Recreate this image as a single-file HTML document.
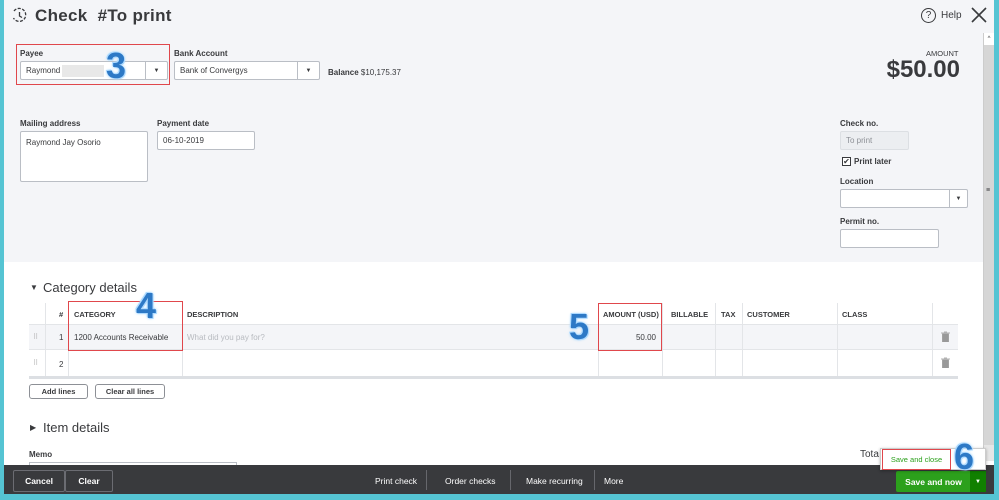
<!DOCTYPE html><html><head><style>
*{margin:0;padding:0;box-sizing:border-box}
body{width:999px;height:500px;overflow:hidden;background:#55c4d3;font-family:"Liberation Sans",sans-serif;color:#393a3d;position:relative}
.a{position:absolute}
#main{left:4px;top:0;width:990px;height:494px;background:#fff;overflow:hidden}
.top{left:0;top:0;width:990px;height:262px;background:#f4f5f8}
.lbl{font-size:8px;font-weight:bold;color:#393a3d}
.in{background:#fff;border:1px solid #babec5;border-radius:2px;font-size:8px;padding:0 5px;display:flex;align-items:center}
.dd{position:absolute;right:0;top:0;bottom:0;width:22px;border-left:1px solid #babec5;font-size:6px;display:flex;align-items:center;justify-content:center}
.num{font-weight:bold;font-size:36px;color:#2d79c6;text-shadow:0 0 2px #bfe3ff,0 0 3px #9fd3ff,1px 1px 0 #a9d8ff,-1px -1px 0 #a9d8ff}
.th{font-size:7.5px;font-weight:bold;top:310px}
.vl{width:1px;background:#e3e5e8}
.btn{border:1px solid #8d9096;border-radius:3px;font-size:7.5px;font-weight:bold;display:flex;align-items:center;justify-content:center;background:#fff}
.ft{font-size:8.5px;color:#fff;top:476px}
</style></head><body>
<div id="main" class="a">
<div class="a top"></div>
</div>
<svg class="a" style="left:11px;top:7px" width="17" height="17" viewBox="0 0 17 17"><path d="M3 4 A6.5 6.5 0 1 1 2.5 11" fill="none" stroke="#393a3d" stroke-width="1.3" stroke-dasharray="3 1.5"/><path d="M8.5 5v4l2.5 1.5" fill="none" stroke="#393a3d" stroke-width="1.3"/></svg>
<div class="a" style="left:35px;top:6px;font-size:17px;font-weight:bold;letter-spacing:0.3px">Check&nbsp; #To print</div>
<div class="a" style="left:921px;top:8px;width:15px;height:15px;border:1.3px solid #393a3d;border-radius:50%;font-size:10px;text-align:center;line-height:13px">?</div>
<div class="a" style="left:941px;top:10px;font-size:10px">Help</div>
<svg class="a" style="left:971px;top:7px" width="16" height="16"><path d="M1 1L15 15M15 1L1 15" stroke="#393a3d" stroke-width="1.6"/></svg>
<div class="a" style="left:983px;top:33px;width:11px;height:428px;background:#e6e6e6;border-left:1px solid #ccc"></div>
<div class="a" style="left:984px;top:33px;width:10px;height:12px;background:#fff;font-size:6px;text-align:center;line-height:12px">^</div>
<div class="a" style="left:984px;top:45px;width:10px;height:400px;background:#d6d6d6"></div>
<div class="a" style="left:986px;top:187px;font-size:7px">≡</div>
<div class="a" style="left:16px;top:44px;width:154px;height:41px;border:1px solid #e0474c"></div>
<div class="a lbl" style="left:20px;top:49px">Payee</div>
<div class="a in" style="left:20px;top:61px;width:148px;height:19px">Raymond<span style="display:inline-block;width:42px;height:12px;background:#e8e8e8;margin-left:2px"></span><div class="dd">▼</div></div>
<div class="a num" style="left:106px;top:45px">3</div>
<div class="a lbl" style="left:174px;top:49px">Bank Account</div>
<div class="a in" style="left:174px;top:61px;width:146px;height:19px">Bank of Convergys<div class="dd">▼</div></div>
<div class="a" style="left:328px;top:68px;font-size:8px"><b>Balance</b> $10,175.37</div>
<div class="a" style="left:926px;top:49px;font-size:7.5px">AMOUNT</div>
<div class="a" style="left:840px;top:56px;width:120px;text-align:right;font-size:24px;font-weight:bold">$50.00</div>
<div class="a lbl" style="left:20px;top:119px">Mailing address</div>
<div class="a in" style="left:20px;top:131px;width:128px;height:51px;align-items:flex-start;padding-top:6px">Raymond Jay Osorio</div>
<div class="a lbl" style="left:157px;top:119px">Payment date</div>
<div class="a in" style="left:157px;top:131px;width:98px;height:19px">06-10-2019</div>
<div class="a lbl" style="left:840px;top:119px">Check no.</div>
<div class="a in" style="left:840px;top:131px;width:69px;height:19px;background:#eceef1;border-color:#dcdfe3;color:#8d9096">To print</div>
<div class="a" style="left:842px;top:157px;width:9px;height:9px;border:1px solid #393a3d;background:#fff;font-size:8px;line-height:7px;text-align:center">✔</div>
<div class="a" style="left:854px;top:157px;font-size:8px;font-weight:bold">Print later</div>
<div class="a lbl" style="left:840px;top:177px">Location</div>
<div class="a in" style="left:840px;top:189px;width:128px;height:19px"><div class="dd" style="width:18px">▼</div></div>
<div class="a lbl" style="left:840px;top:217px">Permit no.</div>
<div class="a in" style="left:840px;top:229px;width:99px;height:19px"></div>
<div class="a" style="left:30px;top:283px;font-size:8px">▼</div>
<div class="a" style="left:43px;top:280px;font-size:13px">Category details</div>
<div class="a" style="left:29px;top:324px;width:929px;height:26px;background:#f4f5f8;border-top:1px solid #e3e5e8;border-bottom:1px solid #e3e5e8"></div>
<div class="a" style="left:29px;top:376px;width:929px;height:3px;background:#dcdfe3"></div>
<div class="a vl" style="left:45px;top:303px;height:73px"></div>
<div class="a vl" style="left:68px;top:303px;height:73px"></div>
<div class="a vl" style="left:182px;top:303px;height:73px"></div>
<div class="a vl" style="left:598px;top:303px;height:73px"></div>
<div class="a vl" style="left:662px;top:303px;height:73px"></div>
<div class="a vl" style="left:715px;top:303px;height:73px"></div>
<div class="a vl" style="left:742px;top:303px;height:73px"></div>
<div class="a vl" style="left:837px;top:303px;height:73px"></div>
<div class="a vl" style="left:932px;top:303px;height:73px"></div>
<div class="a th" style="left:59px">#</div>
<div class="a th" style="left:74px">CATEGORY</div>
<div class="a th" style="left:187px">DESCRIPTION</div>
<div class="a th" style="left:603px">AMOUNT (USD)</div>
<div class="a th" style="left:671px">BILLABLE</div>
<div class="a th" style="left:721px">TAX</div>
<div class="a th" style="left:747px">CUSTOMER</div>
<div class="a th" style="left:842px">CLASS</div>
<div class="a" style="left:33px;top:333px;font-size:7px;color:#aaa">⠿</div>
<div class="a" style="left:33px;top:359px;font-size:7px;color:#aaa">⠿</div>
<div class="a" style="left:59px;top:333px;font-size:8px">1</div>
<div class="a" style="left:59px;top:360px;font-size:8px">2</div>
<div class="a" style="left:74px;top:333px;font-size:8px">1200 Accounts Receivable</div>
<div class="a" style="left:187px;top:333px;font-size:8px;color:#b8bbc0">What did you pay for?</div>
<div class="a" style="left:600px;top:333px;width:56px;text-align:right;font-size:8px">50.00</div>
<svg class="a" style="left:941px;top:331px" width="9" height="11"><path d="M0 2h9M3 1h3M1.5 3h6v8h-6z" fill="#999" stroke="#999" stroke-width=".8"/></svg>
<svg class="a" style="left:941px;top:357px" width="9" height="11"><path d="M0 2h9M3 1h3M1.5 3h6v8h-6z" fill="#999" stroke="#999" stroke-width=".8"/></svg>
<div class="a" style="left:68px;top:301px;width:115px;height:50px;border:1px solid #e0474c"></div>
<div class="a" style="left:598px;top:303px;width:64px;height:48px;border:1px solid #e0474c"></div>
<div class="a num" style="left:136px;top:285px">4</div>
<div class="a num" style="left:569px;top:306px">5</div>
<div class="a btn" style="left:29px;top:384px;width:59px;height:15px">Add lines</div>
<div class="a btn" style="left:95px;top:384px;width:70px;height:15px">Clear all lines</div>
<div class="a" style="left:30px;top:423px;font-size:8px">▶</div>
<div class="a" style="left:43px;top:420px;font-size:13px">Item details</div>
<div class="a lbl" style="left:29px;top:450px">Memo</div>
<div class="a" style="left:29px;top:462px;width:208px;height:6px;border:1px solid #babec5;border-bottom:none;background:#fff"></div>
<div class="a" style="left:860px;top:449px;font-size:10px">Tota</div>
<div class="a" style="left:4px;top:465px;width:990px;height:29px;background:#393a3d"></div>
<div class="a" style="left:13px;top:470px;width:52px;height:22px;border:1px solid #6b6c72;border-radius:2px;color:#fff;font-size:8.5px;font-weight:bold;display:flex;align-items:center;justify-content:center">Cancel</div>
<div class="a" style="left:65px;top:470px;width:48px;height:22px;border:1px solid #6b6c72;border-radius:2px;color:#fff;font-size:8.5px;font-weight:bold;display:flex;align-items:center;justify-content:center">Clear</div>
<div class="a ft" style="left:375px">Print check</div>
<div class="a" style="left:426px;top:470px;width:1px;height:20px;background:#66676c"></div>
<div class="a ft" style="left:445px">Order checks</div>
<div class="a" style="left:510px;top:470px;width:1px;height:20px;background:#66676c"></div>
<div class="a ft" style="left:526px">Make recurring</div>
<div class="a" style="left:594px;top:470px;width:1px;height:20px;background:#66676c"></div>
<div class="a ft" style="left:604px">More</div>
<div class="a" style="left:896px;top:471px;width:75px;height:21px;background:#2ca01c;border-radius:2px 0 0 2px;color:#fff;font-size:8.5px;font-weight:bold;display:flex;align-items:center;justify-content:center">Save and now</div>
<div class="a" style="left:970px;top:471px;width:16px;height:21px;background:#108000;color:#fff;font-size:6px;display:flex;align-items:center;justify-content:center">▼</div>
<div class="a" style="left:880px;top:448px;width:106px;height:22px;background:#fff;border:1px solid #ccc;box-shadow:0 1px 3px rgba(0,0,0,.3)"></div>
<div class="a" style="left:882px;top:449px;width:69px;height:21px;border:1px solid #e0474c;font-size:7.5px;color:#2ca01c;display:flex;align-items:center;justify-content:center">Save and close</div>
<div class="a num" style="left:954px;top:436px">6</div>
</body></html>
